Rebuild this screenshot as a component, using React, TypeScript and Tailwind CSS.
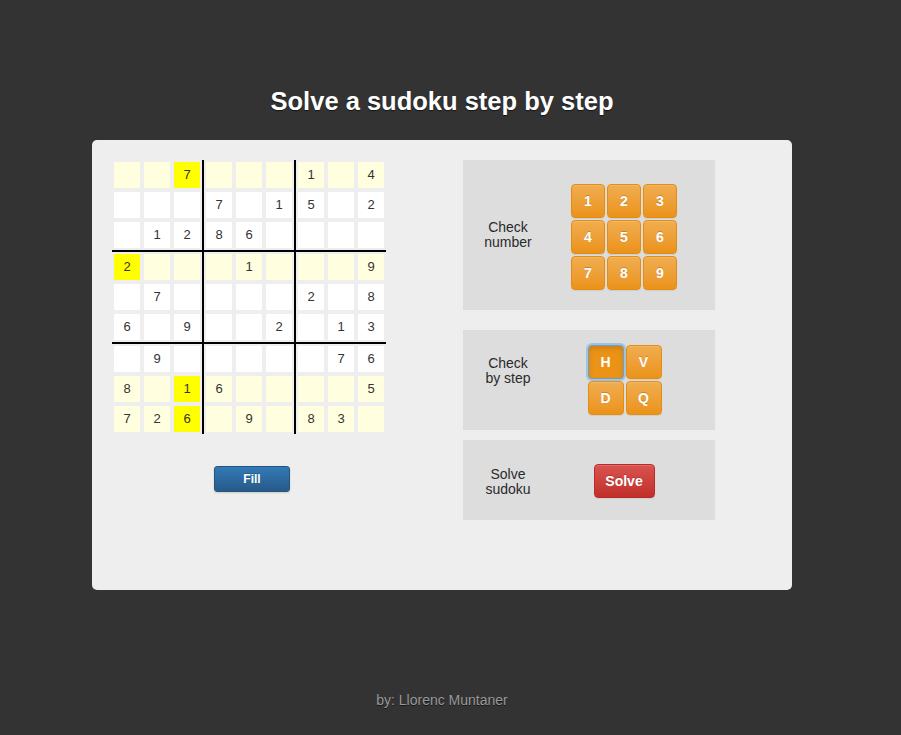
import React from "react";

const board: number[][] = [
  [0, 0, 7, 0, 0, 0, 1, 0, 4],
  [0, 0, 0, 7, 0, 1, 5, 0, 2],
  [0, 1, 2, 8, 6, 0, 0, 0, 0],
  [2, 0, 0, 0, 1, 0, 0, 0, 9],
  [0, 7, 0, 0, 0, 0, 2, 0, 8],
  [6, 0, 9, 0, 0, 2, 0, 1, 3],
  [0, 9, 0, 0, 0, 0, 0, 7, 6],
  [8, 0, 1, 6, 0, 0, 0, 0, 5],
  [7, 2, 6, 0, 9, 0, 8, 3, 0],
];

// rows shaded light yellow, and the cells marked bright yellow
const shadedRows = [0, 3, 7, 8];
const marked = ["0-2", "3-0", "7-2", "8-2"];

const orangeBtn =
  "flex items-center justify-center rounded-[4px] border border-[#e38d13] bg-linear-to-b from-[#f0ad4e] to-[#eb9316] text-white font-bold text-[14px] shadow-[inset_0_1px_0_rgba(255,255,255,0.15),0_1px_1px_rgba(0,0,0,0.075)] [text-shadow:0_-1px_0_rgba(0,0,0,0.2)]";

const Cell = ({ r, c }: { r: number; c: number }) => {
  const v = board[r][c];
  const key = `${r}-${c}`;
  const bg = marked.includes(key)
    ? "bg-[#ffff00]"
    : shadedRows.includes(r)
    ? "bg-[#ffffe0]"
    : "bg-white";
  return (
    <div
      className={`${bg} w-[26px] h-[26px] flex items-center justify-center text-[13px] text-[#333]`}
    >
      {v !== 0 ? v : ""}
    </div>
  );
};

const Box = ({ br, bc }: { br: number; bc: number }) => {
  const cells = [];
  for (let i = 0; i < 3; i++) {
    for (let j = 0; j < 3; j++) {
      cells.push(<Cell key={`${i}-${j}`} r={br * 3 + i} c={bc * 3 + j} />);
    }
  }
  return (
    <div className="bg-[#eee] p-[2px] grid grid-cols-[26px_26px_26px] gap-[4px]">
      {cells}
    </div>
  );
};

const SidePanel = ({
  label,
  height,
  labelClass = "",
  children,
}: {
  label: string[];
  height: string;
  labelClass?: string;
  children: React.ReactNode;
}) => (
  <div className={`${height} w-[252px] bg-[#ddd] flex items-center`}>
    <div
      className={`w-[90px] text-center text-[14px] leading-[15px] text-[#2a2a2a] ${labelClass}`}
    >
      {label.map((l) => (
        <div key={l}>{l}</div>
      ))}
    </div>
    <div className="w-[142px] flex justify-center">{children}</div>
  </div>
);

const App = () => {
  const boxes = [];
  for (let i = 0; i < 3; i++) {
    for (let j = 0; j < 3; j++) {
      boxes.push(<Box key={`${i}-${j}`} br={i} bc={j} />);
    }
  }

  return (
    <div className="min-h-[735px] bg-[#333] font-['Liberation_Sans',Helvetica,Arial,sans-serif]">
      <div className="w-[700px] ml-[92px] flex flex-col items-center">
        <h1 className="mt-[85px] text-white font-bold text-[25.5px] leading-[32px] [text-shadow:0_1px_1px_rgba(0,0,0,0.6)]">
          Solve a sudoku step by step
        </h1>

        <div className="mt-[23px] w-[700px] h-[450px] bg-[#eee] rounded-[5px] p-5 flex">
          {/* board */}
          <div className="w-[280px] flex flex-col items-start">
            <div className="grid grid-cols-[90px_90px_90px] gap-[2px] bg-black">
              {boxes}
            </div>
            <div className="w-full flex justify-center mt-[32px]">
              <button className="w-[76px] h-[26px] rounded-[3px] border border-[#245580] bg-linear-to-b from-[#337ab7] to-[#265a88] text-white font-bold text-[12px] shadow-[0_1px_2px_rgba(0,0,0,0.15)] [text-shadow:0_-1px_0_rgba(0,0,0,0.2)]">
                Fill
              </button>
            </div>
          </div>

          {/* controls */}
          <div className="ml-[71px] flex flex-col">
            <SidePanel label={["Check", "number"]} height="h-[150px]">
              <div className="grid grid-cols-[34px_34px_34px] gap-[2px] mt-[4px]">
                {[1, 2, 3, 4, 5, 6, 7, 8, 9].map((n) => (
                  <button key={n} className={`${orangeBtn} h-[34px]`}>
                    {n}
                  </button>
                ))}
              </div>
            </SidePanel>

            <div className="mt-5">
              <SidePanel
                label={["Check", "by step"]}
                height="h-[100px]"
                labelClass="mb-[18px]"
              >
                <div className="grid grid-cols-[36px_36px] gap-x-[2px] gap-y-[2px] ml-[1px]">
                  <button className="flex items-center justify-center h-[34px] rounded-[4px] border border-[#7d9bb5] bg-[#eb9316] text-white font-bold text-[14px] shadow-[0_0_0_2px_rgba(102,175,233,0.55),inset_0_3px_5px_rgba(0,0,0,0.12)]">
                    H
                  </button>
                  <button className={`${orangeBtn} h-[34px]`}>V</button>
                  <button className={`${orangeBtn} h-[34px]`}>D</button>
                  <button className={`${orangeBtn} h-[34px]`}>Q</button>
                </div>
              </SidePanel>
            </div>

            <div className="mt-[10px]">
              <SidePanel
                label={["Solve", "sudoku"]}
                height="h-[80px]"
                labelClass="mt-[3px]"
              >
                <button className="w-[61px] h-[34px] mt-[2px] rounded-[4px] border border-[#b92c28] bg-linear-to-b from-[#d9534f] to-[#c12e2a] text-white font-bold text-[14px] shadow-[inset_0_1px_0_rgba(255,255,255,0.15),0_1px_1px_rgba(0,0,0,0.075)] [text-shadow:0_-1px_0_rgba(0,0,0,0.2)]">
                  Solve
                </button>
              </SidePanel>
            </div>
          </div>
        </div>

        <div className="mt-[100px] text-[14px] leading-[20px] text-[#999] [text-shadow:0_1px_0_rgba(0,0,0,0.6)]">
          by: Llorenc Muntaner
        </div>
      </div>
    </div>
  );
};

export default App;
